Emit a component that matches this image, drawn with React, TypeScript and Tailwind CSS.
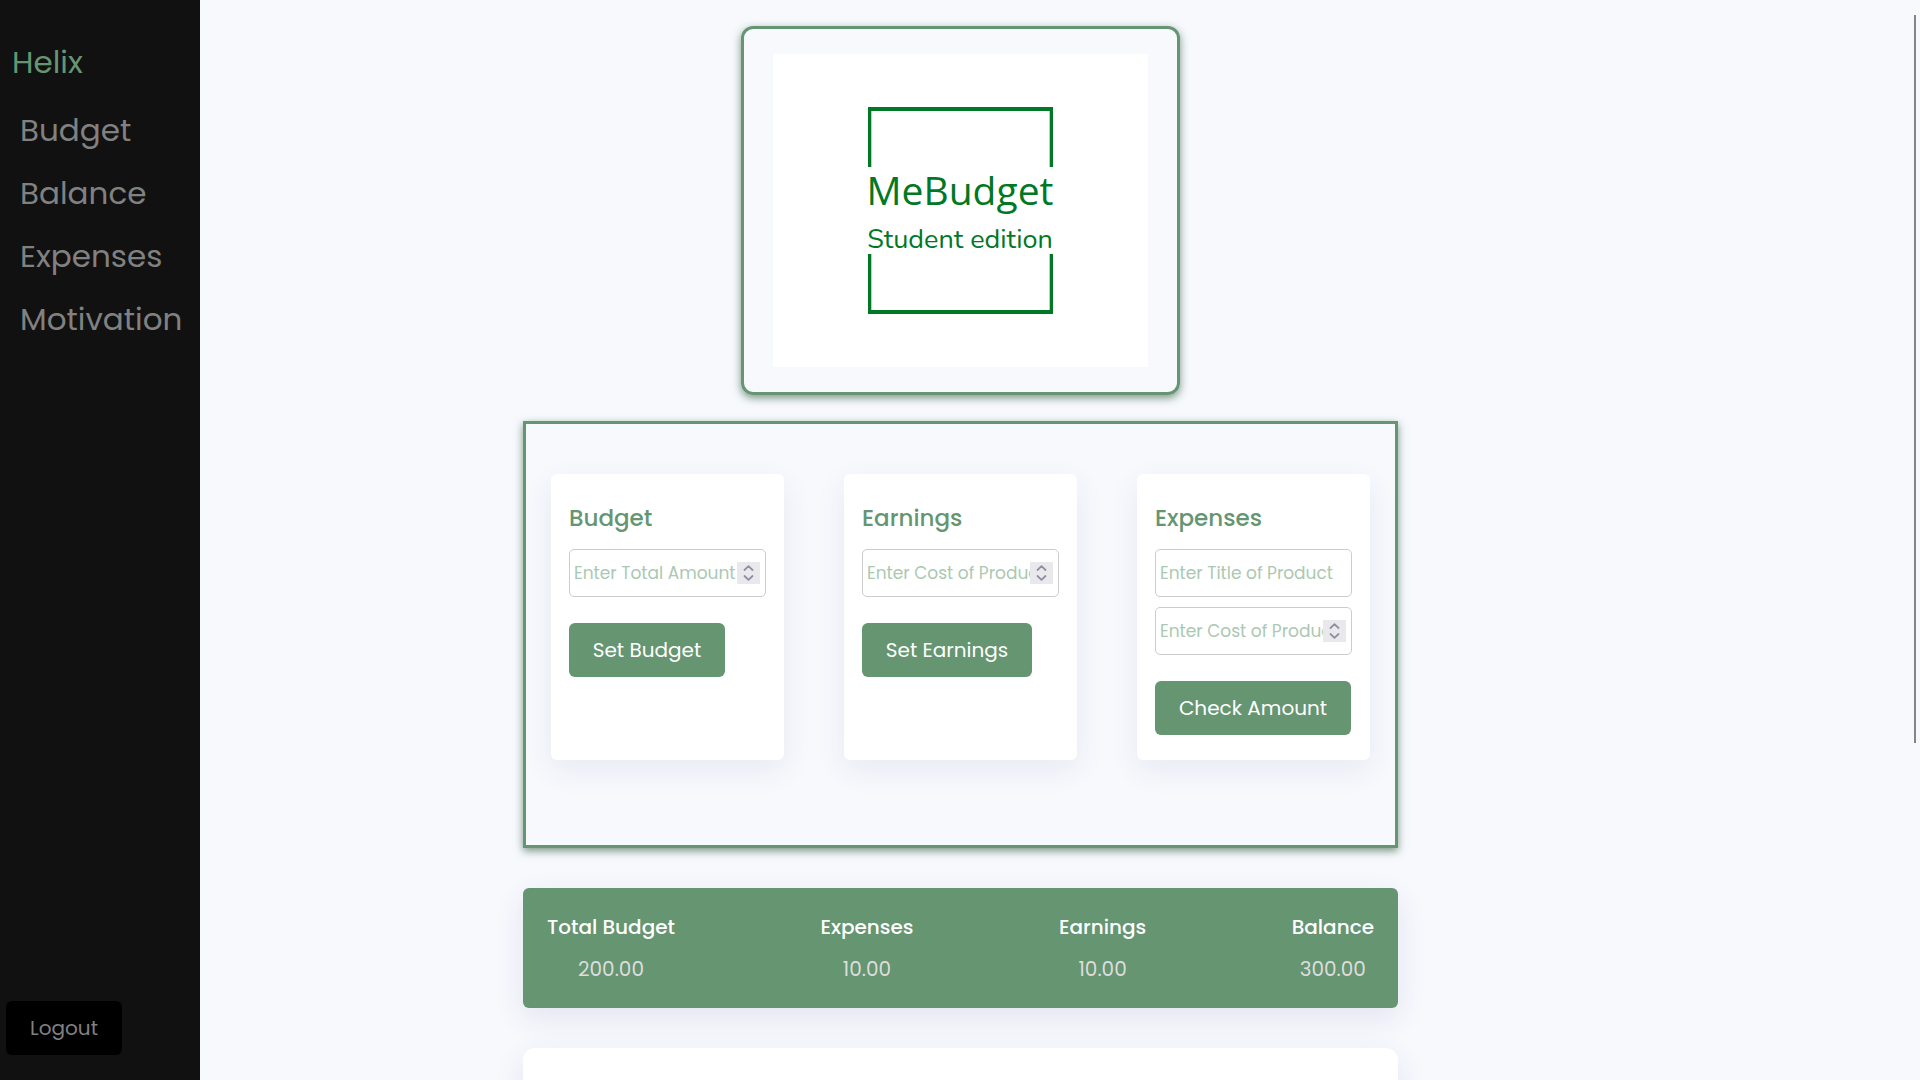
import React from "react";

const navItems = ["Budget", "Balance", "Expenses", "Motivation"];

const totals = [
  { label: "Total Budget", value: "200.00" },
  { label: "Expenses", value: "10.00" },
  { label: "Earnings", value: "10.00" },
  { label: "Balance", value: "300.00" },
];

function Logo() {
  return (
    <div className="mx-auto mt-[26px] w-[439px] rounded-xl border-3 border-[#659571] px-[29px] py-[25px] shadow-[0_3px_8px_rgba(20,70,35,0.55)]">
      <svg viewBox="0 0 375 313" className="block h-[313px] w-full bg-white" role="img" aria-label="MeBudget Student edition">
        <g fill="#017824">
          <path d="M95 53H280V113H276.7V57H98.3V113H95Z" />
          <path d="M95 200H98.3V256H276.7V200H280V260H95Z" />
          <text x="187" y="151" textAnchor="middle" fontFamily="'Open Sans', sans-serif" fontSize="39">
            MeBudget
          </text>
          <text x="187" y="194" textAnchor="middle" fontFamily="Nunito, Lato, sans-serif" fontSize="27" className="[font-variant-ligatures:none]">
            Student edition
          </text>
        </g>
      </svg>
    </div>
  );
}

function Field({ label, type }: { label: string; type: "text" | "number" }) {
  return (
    <div className="relative">
      <input
        type={type}
        placeholder={label}
        aria-label={label}
        className="block h-12 w-full appearance-none rounded-[5px] border border-[#cccccc] bg-white px-1 text-[17px] text-[#659571] placeholder-[#abc8b2] [appearance:textfield] [&::-webkit-inner-spin-button]:appearance-none"
      />
      {type === "number" && (
        <span className="absolute right-1.5 top-[13px] flex h-[22px] w-[23px] items-center justify-center bg-[#e9e9ed]" aria-hidden="true">
          <svg width="11" height="16" viewBox="0 0 11 16" fill="none" stroke="#8f8f9d" strokeWidth="1.8" strokeLinecap="round" strokeLinejoin="round">
            <path d="M1.5 5 5.5 1.2 9.5 5M1.5 11 5.5 14.8 9.5 11" />
          </svg>
        </span>
      )}
    </div>
  );
}

function EntryCard({ title, button, width, children }: { title: string; button: string; width: string; children: React.ReactNode }) {
  return (
    <form className="rounded-md bg-white px-[18px] py-[25px] shadow-[0_10px_30px_rgba(60,50,130,0.08)]" onSubmit={(e) => e.preventDefault()}>
      <h2 className="mb-[10px] h-10 text-[23px] leading-[38px] font-medium text-[#659571]">{title}</h2>
      <div className="flex flex-col gap-[10px]">{children}</div>
      <button type="submit" className={`mt-[26px] h-[54px] rounded-md bg-[#659571] text-xl text-white ${width}`}>
        {button}
      </button>
    </form>
  );
}

export default function App() {
  return (
    <div className="relative flex h-screen overflow-hidden bg-[#f7f9fd] font-['Poppins','Inter',sans-serif]">
      <aside className="flex w-[200px] shrink-0 flex-col bg-[#111111] pb-[25px] pt-[38px] text-[31px] text-[#818181]">
        <a href="#home" className="mb-5 pl-3 leading-[48px] text-[#659571]">
          Helix
        </a>
        <nav className="flex flex-col gap-[15px] pl-5">
          {navItems.map((item) => (
            <a key={item} href={`#${item.toLowerCase()}`} className="leading-[48px]">
              {item}
            </a>
          ))}
        </nav>
        <button type="button" className="ml-1.5 mt-auto h-[54px] w-[116px] rounded-md bg-black text-xl">
          Logout
        </button>
      </aside>

      <main className="min-w-0 flex-1 pr-[199px]">
        <div className="mx-auto max-w-[875px]">
          <Logo />

          <section className="mt-[26px] grid grid-cols-3 gap-[60px] border-3 border-[#659571] px-[25px] pb-[85px] pt-[50px] shadow-[0_3px_8px_rgba(20,70,35,0.55)]">
            <EntryCard title="Budget" button="Set Budget" width="w-[156px]">
              <Field label="Enter Total Amount" type="number" />
            </EntryCard>
            <EntryCard title="Earnings" button="Set Earnings" width="w-[170px]">
              <Field label="Enter Cost of Product" type="number" />
            </EntryCard>
            <EntryCard title="Expenses" button="Check Amount" width="w-[196px]">
              <Field label="Enter Title of Product" type="text" />
              <Field label="Enter Cost of Product" type="number" />
            </EntryCard>
          </section>

          <dl className="mt-10 flex justify-between rounded-md bg-[#659571] px-6 pb-6 pt-[23px] text-center text-xl shadow-[0_10px_30px_rgba(60,50,130,0.1)]">
            {totals.map((t) => (
              <div key={t.label}>
                <dt className="mb-[11px] leading-8 font-medium text-white">{t.label}</dt>
                <dd className="leading-[30px] text-[#dddddd]">{t.value}</dd>
              </div>
            ))}
          </dl>

          <section className="mt-10 h-40 rounded-xl bg-white shadow-[0_10px_30px_rgba(60,50,130,0.1)]" aria-label="Expense list" />
        </div>
      </main>

      <div className="absolute right-1 top-[15px] h-[728px] w-0.5 bg-[#858585]" aria-hidden="true" />
    </div>
  );
}
